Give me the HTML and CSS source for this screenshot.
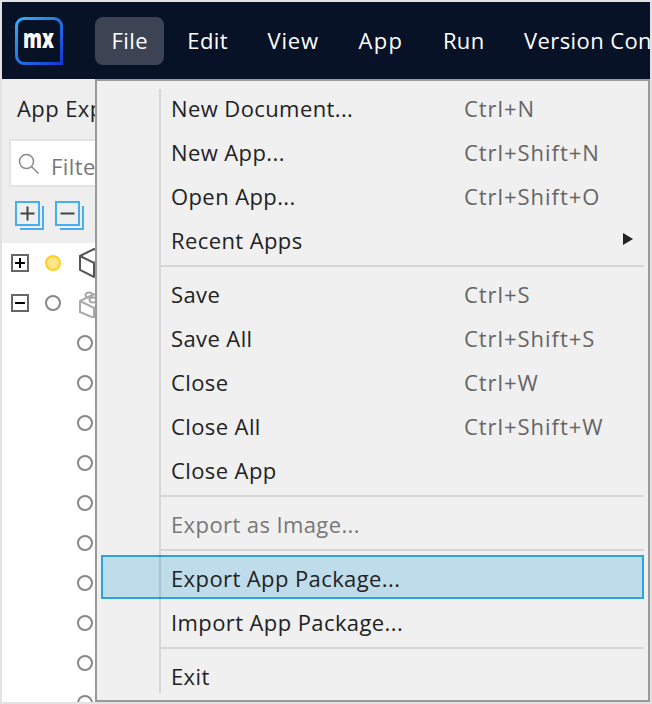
FILE: index.html
```html
<!DOCTYPE html>
<html lang="en">
<head>
    <meta charset="UTF-8">
    <title>Mendix Studio Pro</title>
    <link rel="stylesheet" href="styles.css">
</head>
<body>
<div class="app">
    <div class="topbar">
        <svg class="logo" width="48" height="48" viewBox="0 0 48 48">
            <defs>
                <linearGradient id="logoGrad" x1="0" y1="0" x2="1" y2="1">
                    <stop offset="0" stop-color="#2fb0f7"/>
                    <stop offset="1" stop-color="#1438d2"/>
                </linearGradient>
            </defs>
            <path d="M9 1.500H39A7.500 7.500 0 0 1 46.500 9V46.500H9A7.500 7.500 0 0 1 1.500 39V9A7.500 7.500 0 0 1 9 1.500Z" fill="none" stroke="url(#logoGrad)" stroke-width="3"/>
            <text class="logo-text" x="8" y="31" textLength="31" lengthAdjust="spacingAndGlyphs">mx</text>
        </svg>
        <ul class="mainmenu">
            <li class="current">File</li>
            <li>Edit</li>
            <li class="menu-view">View</li>
            <li class="menu-app">App</li>
            <li>Run</li>
            <li>Version Control</li>
        </ul>
    </div>
    <div class="body">
        <div class="explorer">
            <div class="explorer-title">App Explorer</div>
            <div class="filter">
                <svg width="21" height="21" viewBox="0 0 21 21" fill="none" stroke="#8a8a8a" stroke-width="1.500">
                    <circle cx="8.500" cy="8.500" r="7"/>
                    <path d="M13.500 13.500L20.500 20.500"/>
                </svg>
                <span>Filter...</span>
            </div>
            <div class="tools">
                <svg width="30" height="30" viewBox="0 0 30 30" fill="none">
                    <path d="M28 5V28H5" stroke="#45aef0" stroke-width="2"/>
                    <rect x="1" y="1" width="23" height="23" stroke="#45aef0" stroke-width="2"/>
                    <path d="M5.500 12.500H19.500M12.500 5.500V19.500" stroke="#444" stroke-width="2"/>
                </svg>
                <svg width="30" height="30" viewBox="0 0 30 30" fill="none">
                    <path d="M28 5V28H5" stroke="#45aef0" stroke-width="2"/>
                    <rect x="1" y="1" width="23" height="23" stroke="#45aef0" stroke-width="2"/>
                    <path d="M5.500 12.500H19.500" stroke="#444" stroke-width="2"/>
                </svg>
            </div>
            <ul class="tree">
                <li>
                    <span class="expander">
                        <svg width="18" height="18" viewBox="0 0 18 18"><path d="M4 9H14M9 4V14" stroke="#000" stroke-width="2"/></svg>
                    </span>
                    <span class="dot dot-yellow"></span>
                    <svg class="node-icon" width="30" height="30" viewBox="0 0 30 30" fill="none" stroke="#555" stroke-width="2">
                        <path d="M1 8L15 1L29 8V22L15 29L1 22ZM1 8L15 15L29 8M15 15V29"/>
                    </svg>
                </li>
                <li>
                    <span class="expander">
                        <svg width="18" height="18" viewBox="0 0 18 18"><path d="M4 9H14" stroke="#000" stroke-width="2"/></svg>
                    </span>
                    <span class="dot"></span>
                    <svg class="node-icon" width="30" height="30" viewBox="0 0 30 30" fill="none" stroke="#aaa" stroke-width="2">
                        <path d="M1 13L15 6L29 13V24L15 30L1 24ZM1 13L15 20L29 13M15 20V30"/>
                        <ellipse cx="10" cy="7" rx="3.500" ry="2.500"/>
                        <ellipse cx="14" cy="12" rx="3.500" ry="2.500"/>
                    </svg>
                </li>
                <li class="leaf"><span class="dot"></span></li>
                <li class="leaf"><span class="dot"></span></li>
                <li class="leaf"><span class="dot"></span></li>
                <li class="leaf"><span class="dot"></span></li>
                <li class="leaf"><span class="dot"></span></li>
                <li class="leaf"><span class="dot"></span></li>
                <li class="leaf"><span class="dot"></span></li>
                <li class="leaf"><span class="dot"></span></li>
                <li class="leaf"><span class="dot"></span></li>
                <li class="leaf"><span class="dot"></span></li>
            </ul>
        </div>
    </div>
    <div class="filemenu">
        <div class="item"><span class="label">New Document...</span><span class="keys">Ctrl+N</span></div>
        <div class="item"><span class="label">New App...</span><span class="keys">Ctrl+Shift+N</span></div>
        <div class="item"><span class="label">Open App...</span><span class="keys">Ctrl+Shift+O</span></div>
        <div class="item"><span class="label">Recent Apps</span><span class="arrow"></span></div>
        <div class="sep"></div>
        <div class="item"><span class="label">Save</span><span class="keys">Ctrl+S</span></div>
        <div class="item"><span class="label">Save All</span><span class="keys">Ctrl+Shift+S</span></div>
        <div class="item"><span class="label">Close</span><span class="keys">Ctrl+W</span></div>
        <div class="item"><span class="label">Close All</span><span class="keys">Ctrl+Shift+W</span></div>
        <div class="item"><span class="label">Close App</span></div>
        <div class="sep"></div>
        <div class="item disabled"><span class="label">Export as Image...</span></div>
        <div class="sep"></div>
        <div class="item active"><span class="label">Export App Package...</span></div>
        <div class="item"><span class="label">Import App Package...</span></div>
        <div class="sep"></div>
        <div class="item"><span class="label">Exit</span></div>
        <div class="gutter-line"></div>
    </div>
</div>
</body>
</html>
```

FILE: styles.css
```css
* {
    padding: 0;
    margin: 0;
    list-style: none;
    box-sizing: border-box;
}

html,
body {
    height: 100%;
    overflow: hidden;
}

body {
    font-family: "Open Sans", "Noto Sans", sans-serif;
    font-size: 22px;
    letter-spacing: 0.4px;
    color: #222;
}

.app {
    position: relative;
    width: 652px;
    height: 704px;
    border: 2px solid #e2e2e2;
    overflow: hidden;
    background: #fff;
    display: flex;
    flex-direction: column;
}

.topbar {
    height: 77px;
    flex: none;
    background: #081226;
    display: flex;
    align-items: center;
    padding-left: 13px;
    overflow: hidden;
}

.logo {
    flex: none;
}

.logo-text {
    font-family: "Open Sans", sans-serif;
    font-weight: 800;
    font-size: 27px;
    letter-spacing: 0;
    fill: #fff;
}

.mainmenu {
    display: flex;
    gap: 6.4px;
    margin-left: 32px;
    color: #fff;
    white-space: nowrap;
}

.mainmenu li {
    height: 48px;
    line-height: 46px;
    padding: 0 16.5px;
    border-radius: 8px;
}

.mainmenu li.current {
    background: #3c4353;
}

.mainmenu li.menu-view {
    letter-spacing: 0.9px;
}

.mainmenu li.menu-app {
    letter-spacing: 1.4px;
}

.body {
    flex: 1;
    display: flex;
    min-height: 0;
}

.explorer {
    width: 240px;
    background: #eee;
    display: flex;
    flex-direction: column;
}

.explorer-title {
    height: 60px;
    line-height: 59px;
    padding-left: 15px;
    white-space: nowrap;
}

.filter {
    height: 48px;
    margin-left: 7px;
    background: #fff;
    border: 2px solid #e3e3e3;
    display: flex;
    align-items: center;
    gap: 12px;
    padding-left: 7px;
    color: #777;
    flex: none;
}

.filter span {
    padding-top: 6px;
}

.tools {
    height: 56px;
    flex: none;
    display: flex;
    gap: 10px;
    padding: 14px 0 0 13px;
}

.tree {
    flex: 1;
    background: #fff;
    overflow: hidden;
}

.tree li {
    height: 40px;
    display: flex;
    align-items: center;
    padding-left: 9px;
}

.tree li.leaf {
    padding-left: 75px;
}

.expander {
    width: 18px;
    height: 18px;
    border: 2px solid #666;
    background: #fff;
    display: flex;
    align-items: center;
    justify-content: center;
    flex: none;
}

.expander svg {
    flex: none;
}

.dot {
    width: 16px;
    height: 16px;
    border-radius: 50%;
    border: 2px solid #888;
    background: #fff;
    flex: none;
}

.expander + .dot {
    margin-left: 16px;
}

.dot-yellow {
    background: #ffe588;
    border-color: #ffcf1f;
}

.node-icon {
    margin-left: 18px;
    flex: none;
}

.filemenu {
    position: absolute;
    left: 93px;
    top: 77px;
    width: 555px;
    height: 623px;
    background: #f0f0f0;
    border: 2px solid #9a9a9a;
    padding: 6px 4px 0;
}

.gutter-line {
    position: absolute;
    left: 62px;
    top: 8px;
    width: 2px;
    height: 604px;
    background: rgba(0, 0, 0, 0.11);
}

.item {
    height: 44px;
    display: flex;
    align-items: center;
    padding: 0 0 2px 70px;
    position: relative;
}

.keys {
    position: absolute;
    left: 363px;
    letter-spacing: 0.95px;
    color: #666;
}

.arrow {
    position: absolute;
    left: 522px;
    top: 14px;
    width: 0;
    height: 0;
    border-left: 10px solid #222;
    border-top: 6px solid transparent;
    border-bottom: 6px solid transparent;
}

.item.disabled {
    color: #777;
}

.item.active {
    background: #bfdcea;
    border: 2px solid #2aa3df;
    margin: -2px 0 2px;
    padding: 2px 0 0 68px;
}

.sep {
    height: 10px;
    padding-top: 2px;
    margin-left: 60px;
}

.sep::before {
    content: "";
    display: block;
    height: 2px;
    background: #d6d6d6;
}
```
